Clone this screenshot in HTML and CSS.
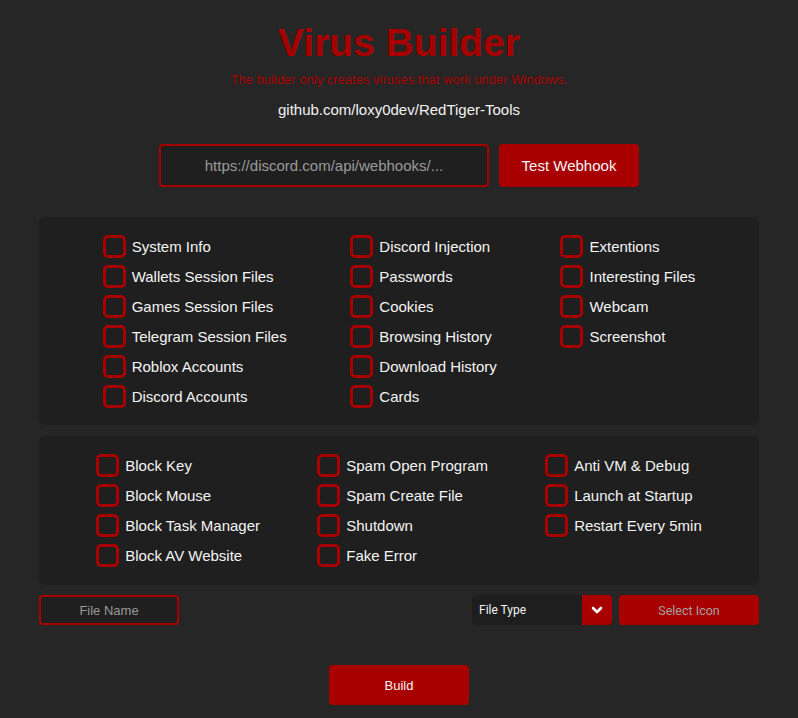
FILE: index.html
```html
<!DOCTYPE html>
<html lang="en">
<head>
<meta charset="utf-8">
<title>Virus Builder</title>
<link rel="stylesheet" href="styles.css">
</head>
<body>
<main class="page">
  <header class="head">
    <h1 class="title">Virus Builder</h1>
    <p class="subtitle">The builder only creates viruses that work under Windows.</p>
    <p class="repo">github.com/loxy0dev/RedTiger-Tools</p>
  </header>

  <div class="webhook">
    <input class="webhook-input" type="text" placeholder="https://discord.com/api/webhooks/...">
    <button class="btn btn-test">Test Webhook</button>
  </div>

  <section class="panel">
    <div class="col">
      <label class="opt"><span class="box"></span>System Info</label>
      <label class="opt"><span class="box"></span>Wallets Session Files</label>
      <label class="opt"><span class="box"></span>Games Session Files</label>
      <label class="opt"><span class="box"></span>Telegram Session Files</label>
      <label class="opt"><span class="box"></span>Roblox Accounts</label>
      <label class="opt"><span class="box"></span>Discord Accounts</label>
    </div>
    <div class="col">
      <label class="opt"><span class="box"></span>Discord Injection</label>
      <label class="opt"><span class="box"></span>Passwords</label>
      <label class="opt"><span class="box"></span>Cookies</label>
      <label class="opt"><span class="box"></span>Browsing History</label>
      <label class="opt"><span class="box"></span>Download History</label>
      <label class="opt"><span class="box"></span>Cards</label>
    </div>
    <div class="col">
      <label class="opt"><span class="box"></span>Extentions</label>
      <label class="opt"><span class="box"></span>Interesting Files</label>
      <label class="opt"><span class="box"></span>Webcam</label>
      <label class="opt"><span class="box"></span>Screenshot</label>
    </div>
  </section>

  <section class="panel panel-2">
    <div class="col">
      <label class="opt"><span class="box"></span>Block Key</label>
      <label class="opt"><span class="box"></span>Block Mouse</label>
      <label class="opt"><span class="box"></span>Block Task Manager</label>
      <label class="opt"><span class="box"></span>Block AV Website</label>
    </div>
    <div class="col">
      <label class="opt"><span class="box"></span>Spam Open Program</label>
      <label class="opt"><span class="box"></span>Spam Create File</label>
      <label class="opt"><span class="box"></span>Shutdown</label>
      <label class="opt"><span class="box"></span>Fake Error</label>
    </div>
    <div class="col">
      <label class="opt"><span class="box"></span>Anti VM &amp; Debug</label>
      <label class="opt"><span class="box"></span>Launch at Startup</label>
      <label class="opt"><span class="box"></span>Restart Every 5min</label>
    </div>
  </section>

  <div class="bottom">
    <input class="file-name" type="text" placeholder="File Name">
    <div class="bottom-right">
      <div class="select">
        <span class="select-label">File Type</span>
        <span class="select-arrow">
          <svg width="12" height="8" viewBox="0 0 12 8"><path d="M2 2 L6 6 L10 2" fill="none" stroke="#fff" stroke-width="2.6" stroke-linecap="round" stroke-linejoin="round"/></svg>
        </span>
      </div>
      <button class="btn btn-icon">Select Icon</button>
    </div>
  </div>

  <div class="build-row">
    <button class="btn btn-build">Build</button>
  </div>
</main>
</body>
</html>
```

FILE: styles.css
```css
* { box-sizing: border-box; }

html, body {
  margin: 0;
  padding: 0;
  background: #262626;
  font-family: "Liberation Sans", Arial, sans-serif;
  color: #ffffff;
}

.page {
  width: 798px;
  min-height: 718px;
  padding: 0 39px;
}

.head {
  text-align: center;
  padding-top: 20px;
}

.title {
  margin: 0;
  font-size: 39px;
  line-height: 46px;
  font-weight: bold;
  color: #a60000;
}

.subtitle {
  margin: 6px 0 0;
  font-size: 13px;
  line-height: 16px;
  color: #a60000;
}

.repo {
  margin: 13px 0 0;
  font-size: 15px;
  line-height: 18px;
  color: #f2f2f2;
}

.webhook {
  display: flex;
  justify-content: center;
  gap: 10px;
  margin-top: 25px;
}

.webhook-input {
  width: 330px;
  height: 43px;
  background: #1f1f1f;
  border: 2px solid #a80000;
  border-radius: 4px;
  color: #ddd;
  font-family: "Liberation Sans", Arial, sans-serif;
  font-size: 15px;
  text-align: center;
  outline: none;
}
.webhook-input::placeholder { color: #9a9a9a; }

.btn {
  border: none;
  background: #a80000;
  border-radius: 4px;
  font-family: "Liberation Sans", Arial, sans-serif;
  color: #f4f4f4;
  padding: 0;
}

.btn-test {
  width: 140px;
  height: 43px;
  font-size: 15px;
}

.panel {
  display: flex;
  justify-content: space-evenly;
  align-items: flex-start;
  background: #1f1f1f;
  border-radius: 6px;
  margin-top: 30px;
  padding: 18px 0 17px;
}

.panel-2 {
  margin-top: 11px;
  padding-bottom: 18px;
}

.col {
  display: flex;
  flex-direction: column;
  gap: 7px;
}

.opt {
  display: flex;
  align-items: center;
  gap: 6px;
  height: 23px;
  font-size: 15px;
  color: #f4f4f4;
  white-space: nowrap;
}

.box {
  width: 23px;
  height: 23px;
  border: 3px solid #a80000;
  border-radius: 5px;
  flex: none;
}

.bottom {
  display: flex;
  justify-content: space-between;
  align-items: center;
  margin-top: 10px;
}

.file-name {
  width: 140px;
  height: 30px;
  background: #1f1f1f;
  border: 2px solid #a80000;
  border-radius: 4px;
  font-family: "Liberation Sans", Arial, sans-serif;
  font-size: 13px;
  text-align: center;
  color: #ddd;
  outline: none;
}
.file-name::placeholder { color: #9a9a9a; }

.bottom-right {
  display: flex;
  gap: 7px;
}

.select {
  display: flex;
  width: 140px;
  height: 30px;
  background: #1e1e1e;
  border-radius: 4px;
  overflow: hidden;
}

.select-label {
  flex: 1;
  display: flex;
  align-items: center;
  padding-left: 7px;
  font-family: Roboto, "Liberation Sans", sans-serif;
  font-size: 12px;
  color: #f4f4f4;
}

.select-arrow {
  width: 30px;
  background: #a80000;
  display: flex;
  align-items: center;
  justify-content: center;
}

.btn-icon {
  width: 140px;
  height: 30px;
  font-family: Roboto, "Liberation Sans", sans-serif;
  font-size: 12.5px;
  color: #a0a0a0;
}

.build-row {
  display: flex;
  justify-content: center;
  margin-top: 40px;
}

.btn-build {
  width: 140px;
  height: 40px;
  font-size: 13px;
}
```
